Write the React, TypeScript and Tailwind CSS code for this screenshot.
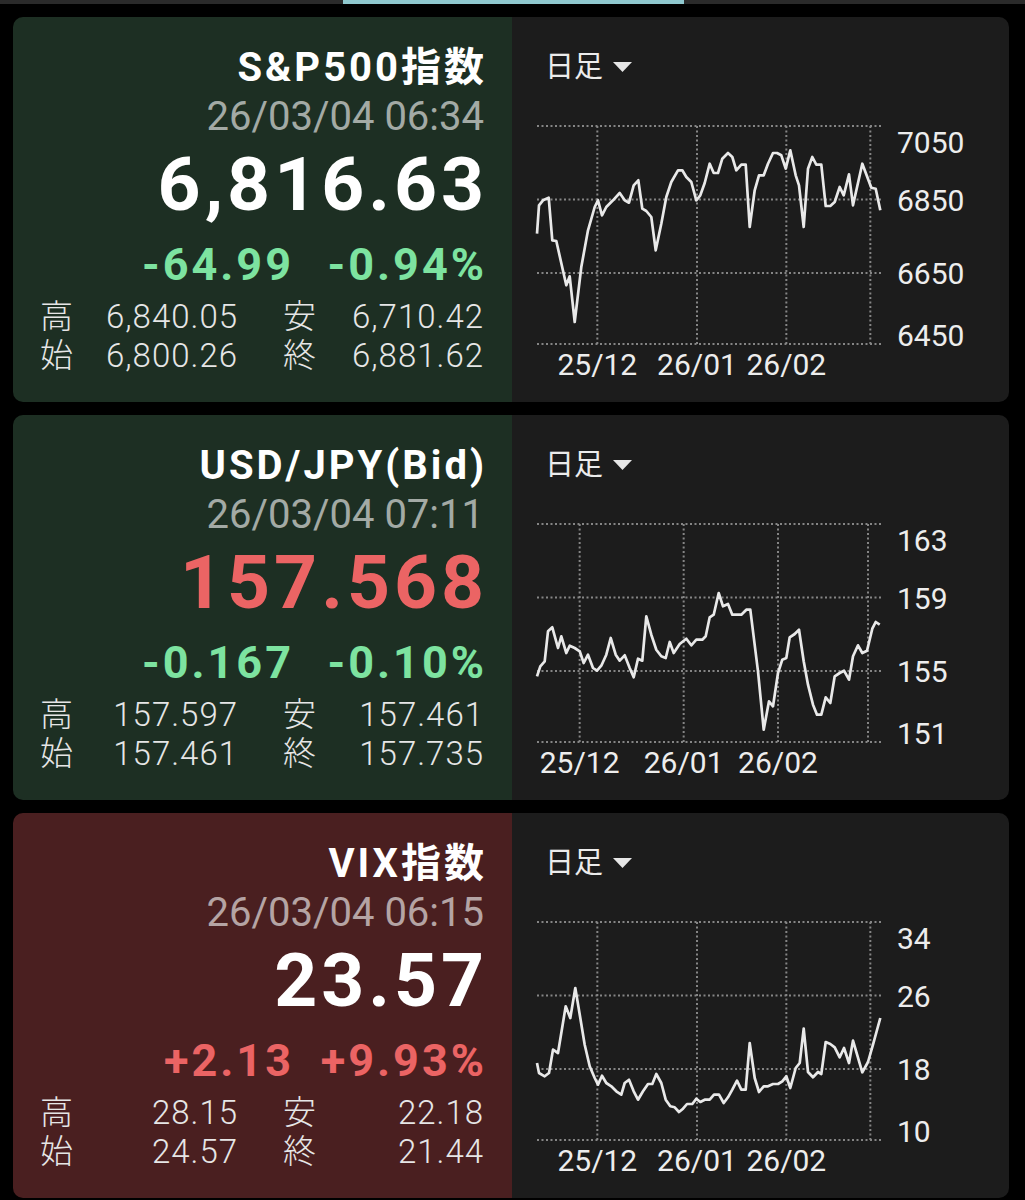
import React from 'react';

type Pt = [number, number];

interface Quote {
  name: string;
  time: string;
  price: string;
  priceColor: string;
  change: string;
  changePct: string;
  changeColor: string;
  panelBg: string;
  stats: [string, string, string, string];
  yLabels: string[];
  xLabels: string[];
  vlines: number[];
  top: number;
  points: Pt[];
}

// chart points were traced at 3x, so they get divided by 3 below
const quotes: Quote[] = [
  {
    name: 'S&P500指数',
    time: '26/03/04 06:34',
    price: '6,816.63',
    priceColor: 'text-white',
    change: '-64.99',
    changePct: '-0.94%',
    changeColor: 'text-[#7de3a0]',
    panelBg: 'bg-[#1d2f23]',
    stats: ['6,840.05', '6,710.42', '6,800.26', '6,881.62'],
    yLabels: ['7050', '6850', '6650', '6450'],
    xLabels: ['25/12', '26/01', '26/02'],
    vlines: [263, 562, 830, 1082],
    top: 377,
    points: [
      [82, 700], [88, 615], [100, 600], [117, 592], [128, 720], [140, 722], [170, 855], [180, 828],
      [195, 965], [215, 800], [235, 690], [255, 620], [265, 600], [277, 645], [290, 620], [310, 600],
      [330, 578], [345, 600], [358, 607], [372, 555], [386, 540], [398, 625], [410, 632], [425, 650],
      [438, 750], [455, 670], [470, 590], [485, 545], [505, 510], [518, 510], [530, 530], [545, 545],
      [560, 600], [572, 585], [585, 548], [600, 490], [612, 518], [625, 518], [638, 475], [655, 458],
      [668, 470], [680, 510], [695, 493], [708, 493], [720, 680], [735, 570], [748, 525], [762, 525],
      [775, 490], [790, 458], [802, 458], [815, 465], [828, 505], [842, 450], [858, 525], [868, 555],
      [882, 680], [895, 505], [908, 470], [920, 493], [935, 493], [948, 617], [962, 617], [975, 605],
      [990, 560], [1002, 585], [1018, 522], [1030, 615], [1058, 490], [1085, 562], [1098, 565], [1112, 630],
    ],
  },
  {
    name: 'USD/JPY(Bid)',
    time: '26/03/04 07:11',
    price: '157.568',
    priceColor: 'text-[#eb6464]',
    change: '-0.167',
    changePct: '-0.10%',
    changeColor: 'text-[#7de3a0]',
    panelBg: 'bg-[#1d2f23]',
    stats: ['157.597', '157.461', '157.461', '157.735'],
    yLabels: ['163', '159', '155', '151'],
    xLabels: ['25/12', '26/01', '26/02'],
    vlines: [210, 522, 805, 1075],
    top: 368,
    points: [
      [82, 825], [92, 795], [105, 780], [115, 690], [128, 678], [145, 740], [155, 705], [170, 755],
      [180, 733], [195, 740], [210, 750], [222, 785], [235, 760], [250, 800], [262, 808], [275, 793],
      [290, 760], [303, 710], [318, 760], [330, 778], [345, 762], [360, 800], [372, 828], [385, 772],
      [398, 778], [410, 645], [425, 700], [440, 745], [455, 765], [468, 770], [480, 722], [492, 755],
      [510, 728], [530, 712], [545, 732], [560, 715], [578, 715], [588, 705], [600, 648], [612, 640],
      [627, 575], [640, 615], [655, 608], [668, 640], [695, 640], [710, 625], [722, 625], [745, 810],
      [762, 985], [778, 900], [790, 915], [805, 815], [818, 775], [830, 770], [840, 708], [855, 698],
      [868, 685], [882, 780], [895, 850], [910, 910], [922, 940], [935, 940], [948, 888], [962, 905],
      [975, 825], [990, 815], [1003, 808], [1018, 835], [1030, 765], [1045, 732], [1058, 755], [1072, 748],
      [1088, 682], [1098, 662], [1110, 670],
    ],
  },
  {
    name: 'VIX指数',
    time: '26/03/04 06:15',
    price: '23.57',
    priceColor: 'text-white',
    change: '+2.13',
    changePct: '+9.93%',
    changeColor: 'text-[#eb6464]',
    panelBg: 'bg-[#4a1f20]',
    stats: ['28.15', '22.18', '24.57', '21.44'],
    yLabels: ['34', '26', '18', '10'],
    xLabels: ['25/12', '26/01', '26/02'],
    vlines: [263, 562, 830, 1082],
    top: 392,
    points: [
      [82, 815], [88, 845], [105, 855], [118, 845], [130, 775], [145, 785], [168, 645], [182, 680],
      [197, 590], [212, 680], [225, 760], [240, 825], [255, 860], [265, 880], [277, 853], [290, 875],
      [305, 885], [320, 900], [335, 910], [345, 875], [358, 865], [372, 900], [385, 925], [400, 900],
      [415, 878], [428, 878], [440, 848], [455, 875], [468, 925], [482, 945], [495, 948], [508, 962],
      [520, 952], [532, 938], [548, 938], [560, 922], [572, 932], [585, 925], [600, 925], [613, 910],
      [628, 910], [642, 935], [655, 918], [668, 895], [682, 868], [695, 895], [708, 895], [720, 755],
      [735, 860], [748, 902], [762, 885], [775, 885], [790, 878], [805, 878], [818, 870], [830, 855],
      [842, 890], [858, 830], [870, 815], [882, 712], [895, 842], [910, 858], [925, 842], [935, 848],
      [948, 752], [962, 758], [975, 768], [990, 798], [1003, 770], [1018, 815], [1030, 748], [1058, 843],
      [1075, 812], [1090, 760], [1112, 680],
    ],
  },
];

const hLines = [0, 73.5, 147, 218];
const yLabelCenters = [16.5, 74, 147.5, 209];

function Chart({ q }: { q: Quote }) {
  const pts = q.points
    .map(([x, y]) => `${((x - 82) / 3).toFixed(1)},${((y - q.top) / 3).toFixed(1)}`)
    .join(' ');
  const vx = q.vlines.map((x) => (x - 82) / 3);

  return (
    <svg width={470} height={262} className="ml-[25px] mt-[39px] overflow-visible">
      {hLines.map((y) => (
        <line key={'h' + y} x1={0} x2={345} y1={y} y2={y} stroke="#858585" strokeWidth={2} strokeDasharray="2 2.5" />
      ))}
      {vx.map((x) => (
        <line key={'v' + x} x1={x} x2={x} y1={0} y2={218} stroke="#858585" strokeWidth={2} strokeDasharray="2 2.5" />
      ))}
      <polyline points={pts} fill="none" stroke="#e9e9e9" strokeWidth={2.7} strokeLinejoin="round" />
      {q.yLabels.map((label, i) => (
        <text key={label} x={360} y={yLabelCenters[i] + 10.7} fontSize={30} fill="#ededed">
          {label}
        </text>
      ))}
      {q.xLabels.map((label, i) => (
        <text key={label} x={vx[i]} y={249} fontSize={30} fill="#ededed" textAnchor="middle">
          {label}
        </text>
      ))}
    </svg>
  );
}

function QuoteCard({ q }: { q: Quote }) {
  return (
    <div className="flex h-[385px] w-[996px] overflow-hidden rounded-[10px]">
      {/* left: quote */}
      <div className={`w-[499px] pl-[27px] pr-[28px] pt-[26px] text-right ${q.panelBg}`}>
        <div className="mr-[-3px] text-[40px] font-bold leading-[50px] tracking-[3px] text-white">{q.name}</div>
        <div className="text-[40px] leading-[48px] text-white/60">{q.time}</div>
        <div className={`mr-[-4px] text-[75px] font-bold leading-[86px] tracking-[4px] ${q.priceColor}`}>
          {q.price}
        </div>
        <div className={`mt-[6px] flex justify-end text-[45px] font-bold leading-[64px] tracking-[3px] ${q.changeColor}`}>
          <span>{q.change}</span>
          <span className="mr-[-3px] w-[193px] text-right">{q.changePct}</span>
        </div>
        <div className="text-[33px] font-light leading-[39px] text-[#e6e6e6]">
          <div className="flex">
            <span className="w-[33px] text-left">高</span>
            <span className="w-[165px] text-right tracking-[1px]">{q.stats[0]}</span>
            <span className="ml-[45px] w-[33px] text-left">安</span>
            <span className="flex-1 text-right tracking-[1px]">{q.stats[1]}</span>
          </div>
          <div className="flex">
            <span className="w-[33px] text-left">始</span>
            <span className="w-[165px] text-right tracking-[1px]">{q.stats[2]}</span>
            <span className="ml-[45px] w-[33px] text-left">終</span>
            <span className="flex-1 text-right tracking-[1px]">{q.stats[3]}</span>
          </div>
        </div>
      </div>

      {/* right: chart */}
      <div className="flex flex-1 flex-col bg-[#1c1c1c]">
        <div className="flex items-center pl-[33px] pt-[30px] text-[29px] leading-[40px] text-[#ececec]">
          <span>日足</span>
          <svg width={19} height={10} viewBox="0 0 19 10" className="ml-[10px]">
            <polygon points="0,0 19,0 9.5,10" fill="#e6e6e6" />
          </svg>
        </div>
        <Chart q={q} />
      </div>
    </div>
  );
}

export default function App() {
  return (
    <div className="min-h-screen bg-black font-[Roboto,'Noto_Sans_CJK_JP',sans-serif]">
      <div className="flex h-[4px] bg-[#2a2a2a]">
        <div className="ml-[343px] w-[341px] bg-[#8fc8ce]" />
      </div>
      <div className="flex flex-col gap-[13px] pl-[13px] pt-[13px]">
        {quotes.map((q) => (
          <QuoteCard key={q.name} q={q} />
        ))}
      </div>
    </div>
  );
}
